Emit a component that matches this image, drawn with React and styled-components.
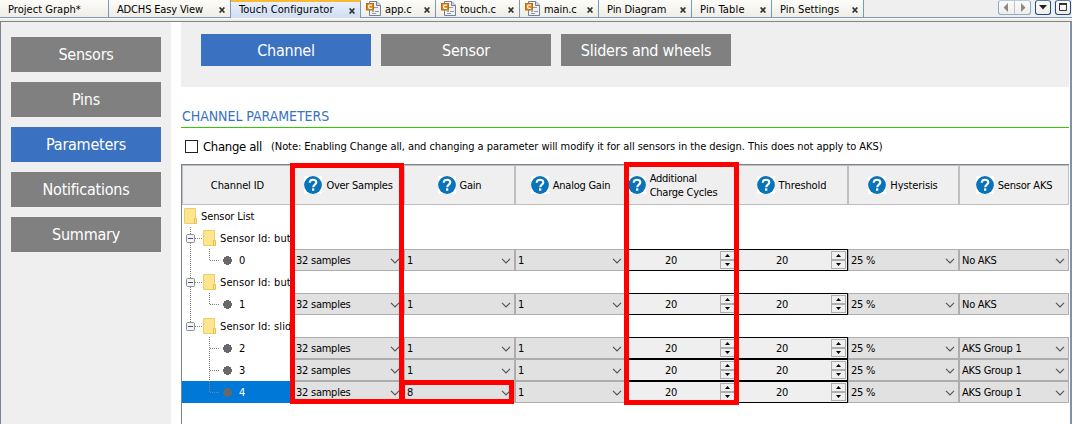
import React from "react";
import styled, { createGlobalStyle, css } from "styled-components";

const GlobalStyle = createGlobalStyle`
  * { box-sizing: border-box; }
  body {
    margin: 0;
    background: #fff;
    color: #000;
    font: 11px/14px "DejaVu Sans Condensed", "DejaVu Sans", sans-serif;
    font-stretch: condensed;
    overflow: hidden;
  }
`;

const Window = styled.div`
  display: flex;
  flex-direction: column;
  width: 1072px;
  height: 424px;
  overflow: hidden;
  background: #efefef;
`;

const TabBar = styled.div`
  display: flex;
  flex: none;
  height: 18px;
  background: linear-gradient(#7a98ba, #7a98ba) bottom / 100% 1px no-repeat #efefef;
`;

const Tab = styled.div`
  display: flex;
  align-items: center;
  flex: none;
  width: ${(p) => p.$width}px;
  height: 17px;
  padding: 0 5px 0 ${(p) => (p.$icon ? 5 : 8)}px;
  border-right: 1px solid #7a98ba;
  background: linear-gradient(#fcfcf9, #efede6);
  ${(p) =>
    p.$active &&
    css`
      height: 18px;
      border-top: 2px solid #fbb934;
      background: linear-gradient(#eaf1fd, #cfdcf3);
    `}
`;

const TabLabel = styled.span`
  flex: 1;
  white-space: nowrap;
  letter-spacing: ${(p) => p.$spacing ?? -0.1}px;
  margin-left: ${(p) => (p.$icon ? 3 : 0)}px;
  margin-top: ${(p) => (p.$active ? 0 : 3)}px;
`;

const CloseIcon = styled.svg`
  flex: none;
  width: 6px;
  height: 6px;
  margin-top: ${(p) => (p.$active ? 1 : 3)}px;
`;

const FileIcon = styled.svg`
  flex: none;
  width: 16px;
  height: 17px;
`;

const TabControls = styled.div`
  display: flex;
  gap: 4px;
  margin: 0 1px 0 auto;
  height: 15px;
`;

const ControlButton = styled.div`
  display: flex;
  width: ${(p) => p.$width}px;
  height: 15px;
  border: 1px solid ${(p) => (p.$strong ? "#1d4a80" : "#8ea9c9")};
  border-top-color: ${(p) => (p.$strong ? "#5c7ca3" : "#b9c8dc")};
  border-radius: 3px;
  background: linear-gradient(#fdfdfb, #eeede8);
  svg { display: block; width: 100%; height: 100%; }
`;

const Seam = styled.div`
  flex: none;
  height: 4px;
  border-top: 1px solid #fbfbf9;
  border-bottom: 1px solid #7b8490;
  background: #f1ede0;
`;

const Workspace = styled.div`
  display: flex;
  flex: 1;
  min-height: 0;
  border-left: 1px solid #7b8490;
  border-right: 2px solid #8091a8;
  background: #fff;
`;

const Sidebar = styled.nav`
  display: flex;
  flex-direction: column;
  gap: 10px;
  flex: none;
  width: 170px;
  padding: 15px 10px;
  background: #efefef;
`;

const Button = styled.div`
  display: flex;
  align-items: center;
  justify-content: center;
  flex: none;
  width: ${(p) => p.$width}px;
  height: ${(p) => p.$height}px;
  padding-top: 1px;
  background: ${(p) => (p.$active ? "#3a71c0" : "#808080")};
  color: #fff;
  font-size: 16px;
  line-height: 20px;
  letter-spacing: -0.25px;
`;

const Main = styled.main`
  display: flex;
  flex-direction: column;
  width: 888px;
  margin-left: 10px;
`;

const Toolbar = styled.div`
  display: flex;
  gap: 10px;
  flex: none;
  height: 65px;
  padding: 12px 20px;
  background: #efefef;
`;

const SectionTitle = styled.h1`
  flex: none;
  height: 41px;
  margin: 0;
  padding: 20px 0 0 1px;
  border-bottom: 1px solid #38c60c;
  color: #3a71c0;
  font-size: 14px;
  font-weight: 400;
  line-height: 18px;
  letter-spacing: -0.05px;
`;

const OptionRow = styled.div`
  display: flex;
  align-items: center;
  flex: none;
  height: 36px;
  padding: 2px 0 0 4px;
`;

const Checkbox = styled.span`
  width: 13px;
  height: 13px;
  margin-top: -1px;
  border: 1px solid #222;
  background: #fff;
`;

const OptionLabel = styled.span`
  width: 68px;
  margin-left: 5px;
  font-size: 13px;
  white-space: nowrap;
  letter-spacing: -0.32px;
`;

const Note = styled.span`
  white-space: nowrap;
  letter-spacing: -0.065px;
`;

const Table = styled.div`
  position: relative;
  flex: 1;
  border-top: 1px solid #7b8490;
  border-left: 1px solid #7b8490;
`;

const Row = styled.div`
  display: grid;
  grid-template-columns: 111px repeat(6, 111px) 110px;
  height: ${(p) => (p.$header ? 40 : 22)}px;
`;

const HeaderCell = styled.div`
  display: flex;
  align-items: center;
  justify-content: center;
  gap: 4px;
  padding-right: ${(p) => p.$trailing ?? 0}px;
  border: 1px solid #bfbfbf;
  background: #efefef;
  white-space: pre;
  letter-spacing: ${(p) => p.$spacing ?? -0.25}px;
`;

const HeaderText = styled.span`
  padding-top: 1px;
`;

const HelpGlyph = styled.svg`
  flex: none;
  width: 18px;
  height: 18px;
  background: #fff;
`;

const TreeCell = styled.div`
  display: flex;
  align-items: center;
  white-space: nowrap;
  letter-spacing: ${(p) => p.$spacing}px;
  background: ${(p) => (p.$selected ? "#0078d7" : "transparent")};
  color: ${(p) => (p.$selected ? "#fff" : "#000")};
`;

const TreeLabel = styled.span`
  padding-top: 2px;
`;

const TreeArt = styled.svg`
  flex: none;
  width: ${(p) => p.$width}px;
  height: 22px;
`;

const Select = styled.div`
  display: flex;
  align-items: center;
  justify-content: space-between;
  padding: 2px 3px 0 2px;
  border: 1px solid #adadad;
  background: #e1e1e1;
  white-space: nowrap;
  letter-spacing: -0.25px;
`;

const Chevron = styled.svg`
  width: 10px;
  height: 6px;
  margin-top: -1px;
`;

const Spinner = styled.div`
  display: flex;
  align-items: center;
  border: 1px solid #000;
  background: #efefef;
  padding: 1px 1px 1px 0;
`;

const SpinnerValue = styled.span`
  flex: 1;
  padding: 2px 5px 0 0;
  text-align: center;
  letter-spacing: -0.4px;
`;

const Stepper = styled.div`
  width: 15px;
  height: 18px;
`;

const StepButton = styled.div`
  display: flex;
  align-items: center;
  justify-content: center;
  height: 9px;
  border: 1px solid #adadad;
  background: #efefef;
`;

const Highlight = styled.div`
  position: absolute;
  left: ${(p) => p.$x}px;
  top: ${(p) => p.$y}px;
  width: ${(p) => p.$width}px;
  height: ${(p) => p.$height}px;
  border: 5px solid #ff0000;
`;

const SourceFile = () => (
  <FileIcon viewBox="0 0 16 17">
    <path d="M3.5 1.500H10.500L14.500 5V15.500H3.500Z" fill="#eef2f6" stroke="#75818e" />
    <path d="M10.500 1.500V5.500H14.500" fill="#cfd9e4" stroke="#75818e" />
    <path d="M8 7.500H12M6 11.500H8M9 11.500H13M6 13.500H10" stroke="#8d9bab" />
    <rect x="0.5" y="3.500" width="7" height="6.500" fill="#d98518" stroke="#bc6d0c" />
    <path d="M6 5.200H3.500Q2.700 5.200 2.700 6V7.500Q2.700 8.300 3.500 8.300H6" fill="none" stroke="#fff" strokeWidth="1.2" />
  </FileIcon>
);

const Close = ({ active }) => (
  <CloseIcon viewBox="0 0 6 6" $active={active}>
    <path d="M0.6 0.5L5.4 5.5M5.4 0.5L0.6 5.5" stroke="#333" strokeWidth="1.7" />
  </CloseIcon>
);

const Help = () => (
  <HelpGlyph viewBox="0 0 18 18">
    <circle cx="9" cy="9" r="8.9" fill="#0873b9" />
    <path d="M5.7 6.8C5.8 4.7 7 3.8 9 3.8C11 3.8 12.3 4.9 12.3 6.5C12.3 8.6 9.2 8.8 9.2 11.2" fill="none" stroke="#fff" strokeWidth="2.1" />
    <rect x="8" y="12.4" width="2.3" height="2.3" fill="#fff" />
  </HelpGlyph>
);

const Folder = ({ x }) => (
  <g transform={`translate(${x} 3)`}>
    <path d="M0.5 0.5H11.5V15.5H0.5Z" fill="#ffe590" stroke="#edcf67" />
    <path d="M10.5 10.5H12.5V15.5H10.5Z" fill="#ffe590" stroke="#e5c04c" />
  </g>
);

const dotted = { stroke: "#808080", strokeDasharray: "1 1", fill: "none" };

const RootArt = () => (
  <TreeArt $width={19} viewBox="0 0 19 22">
    <Folder x={2} />
  </TreeArt>
);

const GroupArt = ({ last }) => (
  <TreeArt $width={38} viewBox="0 0 38 22">
    <path d={last ? "M8.5 0V11" : "M8.5 0V22"} {...dotted} />
    <path d="M13 11.5H20" {...dotted} />
    <rect x="4.5" y="7.5" width="8" height="8" rx="1" fill="#f4f4f4" stroke="#8f8f8f" />
    <path d="M6 11.5H11" stroke="#3c50a0" />
    <Folder x={21} />
  </TreeArt>
);

const LeafArt = ({ trunk, more }) => (
  <TreeArt $width={57} viewBox="0 0 57 22">
    {trunk && <path d="M8.5 0V22" {...dotted} />}
    <path d={more ? "M27.5 0V22" : "M27.5 0V12"} {...dotted} />
    <path d="M28 11.5H37" {...dotted} />
    <path d="M44 7H47V8H49V10H50V13H49V15H47V16H44V15H42V13H41V10H42V8H44Z" fill="#686868" />
  </TreeArt>
);

const Combo = ({ children }) => (
  <Select>
    {children}
    <Chevron viewBox="0 0 10 6">
      <path d="M1 0.8L5 4.8L9 0.8" fill="none" stroke="#555" strokeWidth="1.2" />
    </Chevron>
  </Select>
);

const Spin = () => (
  <Spinner>
    <SpinnerValue>20</SpinnerValue>
    <Stepper>
      <StepButton>
        <svg width="5" height="3"><path d="M0 3L2.5 0L5 3Z" /></svg>
      </StepButton>
      <StepButton>
        <svg width="5" height="3"><path d="M0 0L2.5 3L5 0Z" /></svg>
      </StepButton>
    </Stepper>
  </Spinner>
);

const tabs = [
  { label: "Project Graph*", width: 109, spacing: 0.04, closable: false },
  { label: "ADCHS Easy View", width: 122, spacing: -0.15 },
  { label: "Touch Configurator", width: 130, spacing: 0.06, active: true },
  { label: "app.c", width: 75, icon: true },
  { label: "touch.c", width: 84, icon: true },
  { label: "main.c", width: 79, icon: true },
  { label: "Pin Diagram", width: 93 },
  { label: "Pin Table", width: 80, spacing: 0.15 },
  { label: "Pin Settings", width: 92, spacing: 0.05 },
];

const navItems = ["Sensors", "Pins", "Parameters", "Notifications", "Summary"];
const views = ["Channel", "Sensor", "Sliders and wheels"];
const columns = [
  { label: "Over Samples" },
  { label: "Gain" },
  { label: "Analog Gain" },
  { label: "Additional\nCharge Cycles", trailing: 18 },
  { label: "Threshold", spacing: -0.1, trailing: 2 },
  { label: "Hysterisis", spacing: -0.1, trailing: 1 },
  { label: "Sensor AKS", spacing: -0.2 },
];

const rows = [
  { kind: "root", label: "Sensor List" },
  { kind: "group", label: "Sensor Id: but" },
  { kind: "leaf", label: "0", trunk: true, gain: "1", aks: "No AKS" },
  { kind: "group", label: "Sensor Id: but" },
  { kind: "leaf", label: "1", trunk: true, gain: "1", aks: "No AKS" },
  { kind: "group", label: "Sensor Id: slid", last: true },
  { kind: "leaf", label: "2", more: true, gain: "1", aks: "AKS Group 1" },
  { kind: "leaf", label: "3", more: true, gain: "1", aks: "AKS Group 1" },
  { kind: "leaf", label: "4", selected: true, gain: "8", aks: "AKS Group 1" },
];

const art = { root: RootArt, group: GroupArt, leaf: LeafArt };

const DataRow = ({ row }) => {
  const Art = art[row.kind];
  return (
    <Row>
      <TreeCell $selected={row.selected} $spacing={row.kind === "group" ? 0.12 : -0.1}>
        <Art trunk={row.trunk} more={row.more} last={row.last} />
        <TreeLabel>{row.label}</TreeLabel>
      </TreeCell>
      {row.kind === "leaf" && (
        <>
          <Combo>32 samples</Combo>
          <Combo>{row.gain}</Combo>
          <Combo>1</Combo>
          <Spin />
          <Spin />
          <Combo>25 %</Combo>
          <Combo>{row.aks}</Combo>
        </>
      )}
    </Row>
  );
};

export default function App() {
  return (
    <Window>
      <GlobalStyle />
      <TabBar>
        {tabs.map((t) => (
          <Tab key={t.label} $width={t.width} $active={t.active} $icon={t.icon}>
            {t.icon && <SourceFile />}
            <TabLabel $icon={t.icon} $active={t.active} $spacing={t.spacing}>{t.label}</TabLabel>
            {t.closable !== false && <Close active={t.active} />}
          </Tab>
        ))}
        <TabControls>
          <ControlButton $width={33}>
            <svg viewBox="0 0 31 13">
              <path d="M9 2V11L4.5 6.5ZM22 2V11L26.5 6.5Z" fill="#8b8b8b" />
              <path d="M15.5 0V13" stroke="#b5c3d5" />
            </svg>
          </ControlButton>
          <ControlButton $width={16} $strong>
            <svg viewBox="0 0 14 13"><path d="M3 4H11L7 8.5Z" fill="#222" /></svg>
          </ControlButton>
          <ControlButton $width={16} $strong>
            <svg viewBox="0 0 14 13">
              <path d="M3.5 3V9.5H10.5V3" fill="none" stroke="#333" />
              <path d="M3 3H11" stroke="#333" strokeWidth="2" />
            </svg>
          </ControlButton>
        </TabControls>
      </TabBar>
      <Seam />
      <Workspace>
        <Sidebar>
          {navItems.map((n) => (
            <Button key={n} $width={150} $height={35} $active={n === "Parameters"}>{n}</Button>
          ))}
        </Sidebar>
        <Main>
          <Toolbar>
            {views.map((v) => (
              <Button key={v} $width={170} $height={32} $active={v === "Channel"}>{v}</Button>
            ))}
          </Toolbar>
          <SectionTitle>CHANNEL PARAMETERS</SectionTitle>
          <OptionRow>
            <Checkbox />
            <OptionLabel>Change all</OptionLabel>
            <Note>
              (Note: Enabling Change all, and changing a parameter will modify it for all sensors in the design. This does not apply to AKS)
            </Note>
          </OptionRow>
          <Table>
            <Row $header>
              <HeaderCell $spacing={-0.1}>
                <HeaderText>Channel ID</HeaderText>
              </HeaderCell>
              {columns.map((c) => (
                <HeaderCell key={c.label} $spacing={c.spacing} $trailing={c.trailing}>
                  <Help />
                  <HeaderText>{c.label}</HeaderText>
                </HeaderCell>
              ))}
            </Row>
            {rows.map((r, i) => (
              <DataRow key={i} row={r} />
            ))}
            <Highlight $x={108} $y={-2} $width={114} $height={241} />
            <Highlight $x={218} $y={215} $width={114} $height={24} />
            <Highlight $x={442} $y={-3} $width={115} $height={243} />
          </Table>
        </Main>
      </Workspace>
    </Window>
  );
}
